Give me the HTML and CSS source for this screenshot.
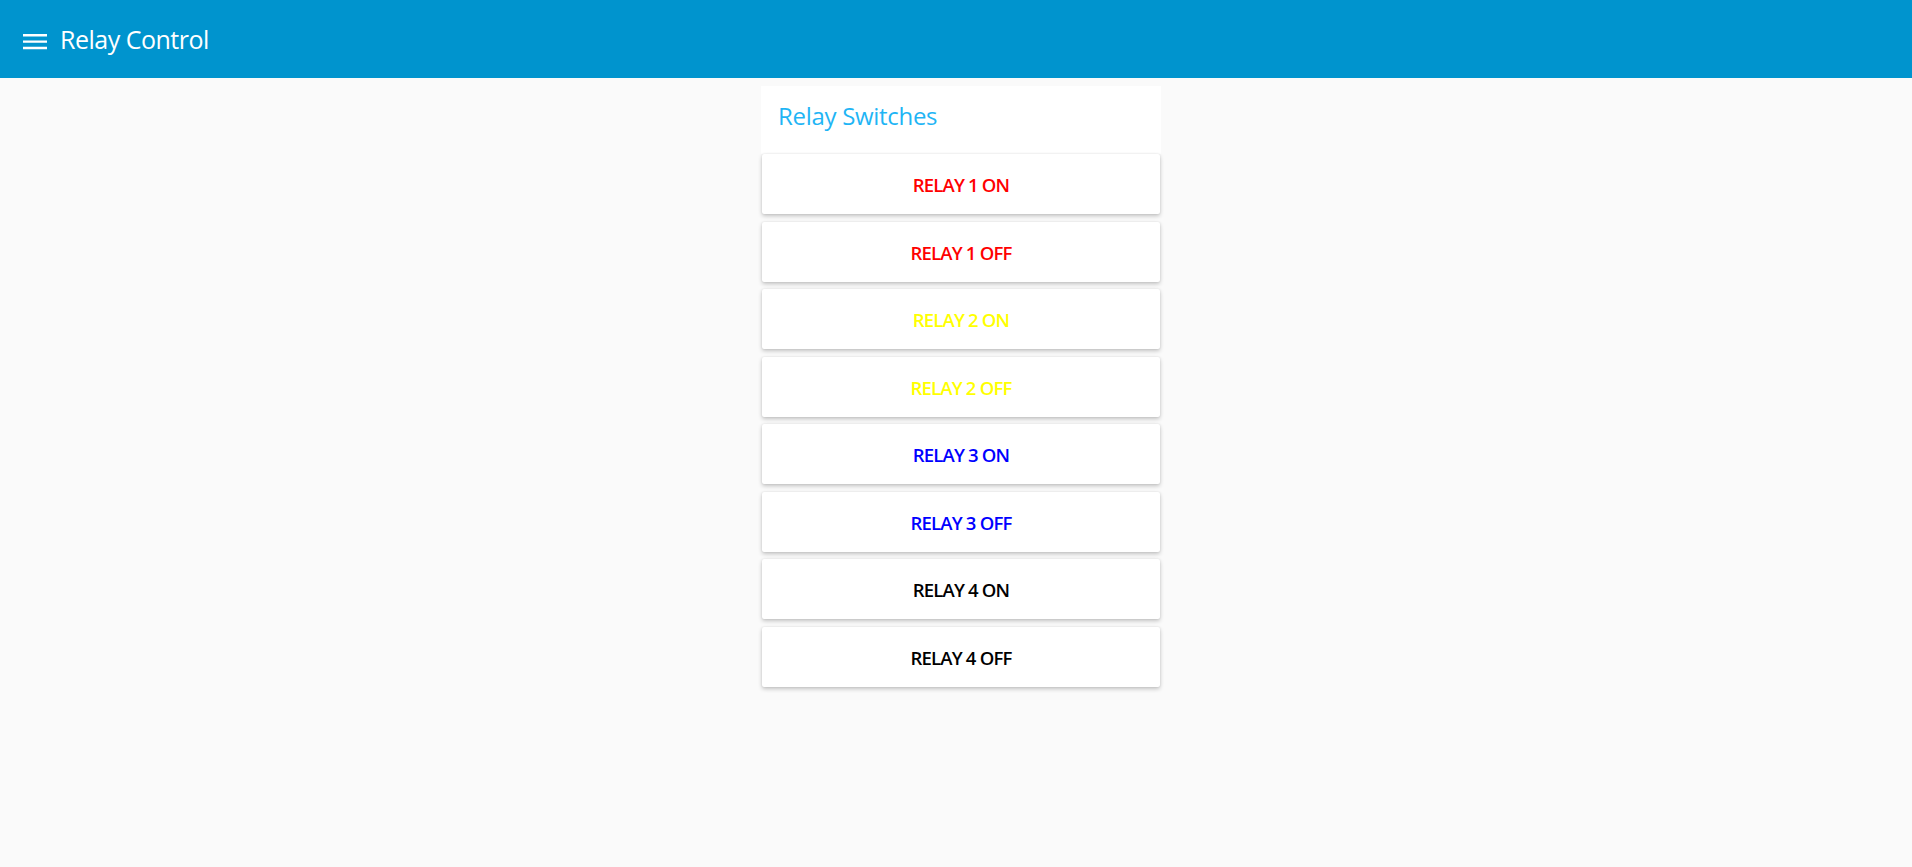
FILE: index.html
```html
<!DOCTYPE html>
<html lang="en">
<head>
<meta charset="utf-8">
<title>Relay Control</title>
<link rel="stylesheet" href="styles.css">
</head>
<body>
<header class="topbar">
  <button class="menu-btn" aria-label="Menu">
    <svg width="24" height="24" viewBox="0 0 24 24"><path d="M0 5h24v2.4H0zM0 11.4h24v2.4H0zM0 17.8h24v2.4H0z" fill="#fff"/></svg>
  </button>
  <h1 class="app-title">Relay Control</h1>
</header>
<main class="content">
  <section class="group">
    <div class="group-title">Relay Switches</div>
    <div class="buttons">
      <button class="relay red">RELAY 1 ON</button>
      <button class="relay red">RELAY 1 OFF</button>
      <button class="relay yellow">RELAY 2 ON</button>
      <button class="relay yellow">RELAY 2 OFF</button>
      <button class="relay blue">RELAY 3 ON</button>
      <button class="relay blue">RELAY 3 OFF</button>
      <button class="relay black">RELAY 4 ON</button>
      <button class="relay black">RELAY 4 OFF</button>
    </div>
  </section>
</main>
</body>
</html>
```
FILE: styles.css
```css
* { box-sizing: border-box; }
html, body { margin: 0; padding: 0; }
body {
  background: #fafafa;
  font-family: "Open Sans", "Noto Sans", sans-serif;
  height: 867px;
  overflow: hidden;
}
.topbar {
  height: 78px;
  background: #0094ce;
  display: flex;
  align-items: center;
  padding-left: 23px;
  gap: 13px;
}
.menu-btn {
  background: none;
  border: none;
  padding: 0;
  width: 24px;
  height: 24px;
  display: flex;
  margin-top: 4px;
}
.app-title {
  margin: 0;
  color: #fff;
  font-size: 25px;
  font-weight: 400;
  letter-spacing: -0.5px;
}
.content {
  display: flex;
  justify-content: center;
  padding-top: 8px;
}
.group {
  width: 400px;
  margin-left: 10px;
}
.group-title {
  background: #fff;
  height: 68px;
  padding-left: 17px;
  padding-top: 13px;
  color: #1fb5f5;
  font-size: 24px;
  letter-spacing: -0.3px;
}
.buttons {
  display: flex;
  flex-direction: column;
  gap: 7.5px;
  padding: 0 1px;
}
.relay {
  height: 60px;
  background: #fff;
  border: none;
  border-radius: 2px;
  box-shadow: 0 2px 4px rgba(0,0,0,0.22), 0 0 2px rgba(0,0,0,0.1);
  font-family: "Open Sans", "Noto Sans", sans-serif;
  font-size: 18.5px;
  font-weight: 600;
  letter-spacing: -0.8px;
  padding-top: 2px;
  cursor: pointer;
}
.red { color: #ff0000; }
.yellow { color: #ffff00; }
.blue { color: #0000ff; }
.black { color: #000; }
```
